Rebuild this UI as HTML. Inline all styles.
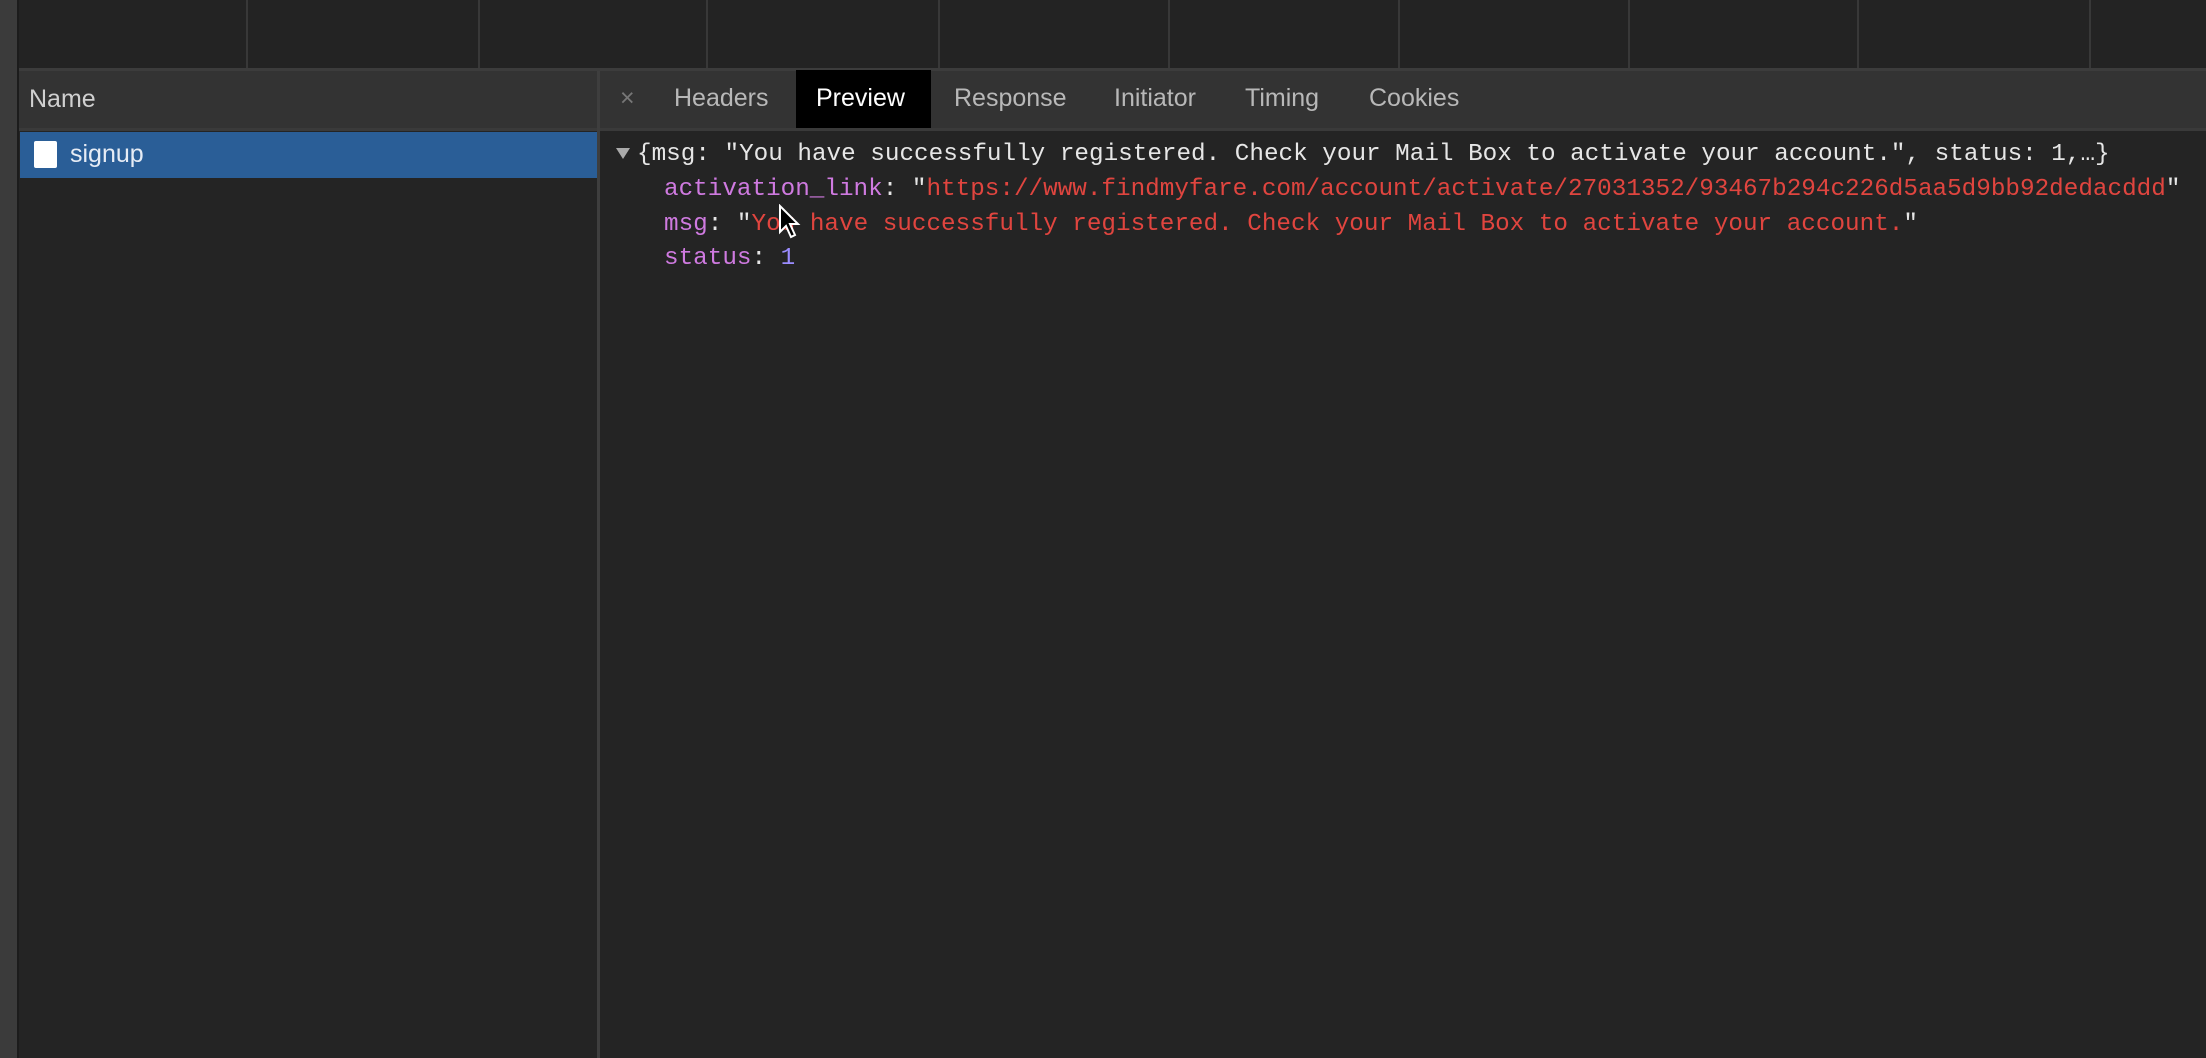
<!DOCTYPE html>
<html><head><meta charset="utf-8"><style>
*{margin:0;padding:0;box-sizing:border-box}
body{width:2206px;height:1058px;background:#242424;position:relative;overflow:hidden;font-family:"Liberation Sans",sans-serif}
.a{position:absolute}
.vl{position:absolute;top:0;height:68px;width:2px;background:#383838}
.tab{position:absolute;top:70px;height:57px;line-height:57px;font-size:25px;color:#b8b8b8}
.mono{position:absolute;font-family:"Liberation Mono",monospace;font-size:24.3px;white-space:pre;line-height:30px}
.k{color:#cf7ae0}.s{color:#e0453f}.n{color:#9b8cff}.w{color:#e6e6e6}
</style></head><body>
<div class="a" style="left:0;top:0;width:17px;height:1058px;background:#3b3b3b"></div>
<div class="a" style="left:17px;top:0;width:2px;height:1058px;background:#1c1c1c"></div>
<div class="a" style="left:19px;top:0;width:2187px;height:68px;background:#232323"></div>
<div class="vl" style="left:246px"></div><div class="vl" style="left:478px"></div><div class="vl" style="left:706px"></div><div class="vl" style="left:938px"></div><div class="vl" style="left:1168px"></div><div class="vl" style="left:1398px"></div><div class="vl" style="left:1628px"></div><div class="vl" style="left:1857px"></div><div class="vl" style="left:2089px"></div>
<div class="a" style="left:19px;top:68px;width:2187px;height:3px;background:#3c3c3c"></div>
<div class="a" style="left:19px;top:71px;width:2187px;height:57px;background:#333333"></div>
<div class="a" style="left:19px;top:128px;width:2187px;height:3px;background:#3a3a3a"></div>
<div class="a" style="left:597px;top:71px;width:3px;height:987px;background:#3e3e3e"></div>
<div class="a" style="left:29px;top:71px;height:57px;line-height:57px;font-size:25px;color:#d0d0d0">Name</div>
<div class="a" style="left:20px;top:132px;width:577px;height:46px;background:#2a5e97"></div>
<div class="a" style="left:34px;top:141px;width:23px;height:27px;background:#fff;border-radius:2px"></div>
<div class="a" style="left:70px;top:132px;height:46px;line-height:44px;font-size:25px;color:#e6ecf5">signup</div>
<div class="tab" style="left:620px;color:#777">×</div>
<div class="tab" style="left:674px">Headers</div>
<div class="a" style="left:796px;top:70px;width:135px;height:58px;background:#000"></div>
<div class="tab" style="left:816px;color:#fff">Preview</div>
<div class="tab" style="left:954px">Response</div>
<div class="tab" style="left:1114px">Initiator</div>
<div class="tab" style="left:1245px">Timing</div>
<div class="tab" style="left:1369px">Cookies</div>
<div class="a" style="left:616px;top:148px;width:0;height:0;border-left:7px solid transparent;border-right:7px solid transparent;border-top:11px solid #aaa"></div>
<div class="mono w" style="left:637px;top:140px">{msg: "You have successfully registered. Check your Mail Box to activate your account.", status: 1,…}</div>
<div class="mono" style="left:664px;top:175px"><span class="k">activation_link</span><span class="w">: "</span><span class="s">https://www.findmyfare.com/account/activate/27031352/93467b294c226d5aa5d9bb92dedacddd</span><span class="w">"</span></div>
<div class="mono" style="left:664px;top:210px"><span class="k">msg</span><span class="w">: "</span><span class="s">You have successfully registered. Check your Mail Box to activate your account.</span><span class="w">"</span></div>
<div class="mono" style="left:664px;top:244px"><span class="k">status</span><span class="w">: </span><span class="n">1</span></div>
<svg class="a" style="left:778px;top:204px" width="24" height="36" viewBox="0 0 12 18"><path d="M1 1 L1 14 L4 11 L6.5 16.5 L8.5 15.5 L6 10 L10 10 Z" fill="#000" stroke="#fff" stroke-width="1"/></svg>
</body></html>
